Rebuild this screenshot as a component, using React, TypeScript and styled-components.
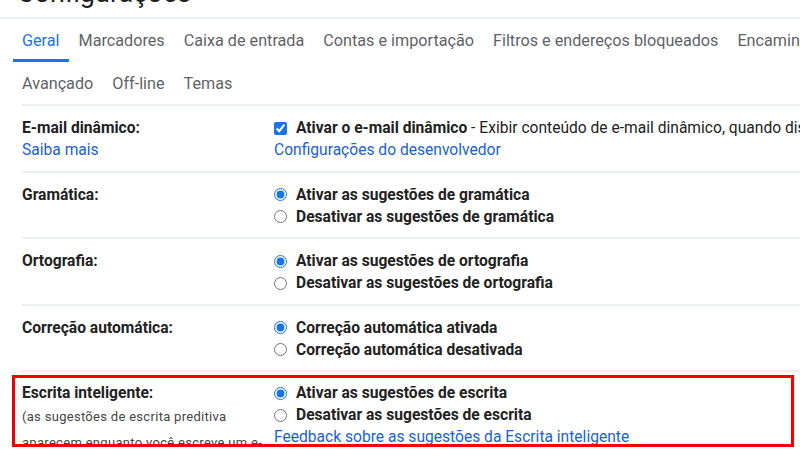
import React from "react";
import styled, { createGlobalStyle } from "styled-components";

const GlobalStyle = createGlobalStyle`
  html, body {
    margin: 0;
    padding: 0;
    background: #fff;
  }
  body {
    font-family: Roboto, "Liberation Sans", Arial, sans-serif;
    color: #222;
  }
`;

const Page = styled.div`
  width: 800px;
  height: 451px;
  overflow: hidden;
  background: #fff;
`;

const Header = styled.div`
  height: 17px;
  display: flex;
  align-items: flex-end;
  overflow: hidden;
  padding-left: 17px;
  border-bottom: 2px solid #eceff1;
`;

const Title = styled.h1`
  margin: 0 0 10px;
  font-size: 27px;
  line-height: 27px;
  font-weight: 400;
  color: #202124;
  white-space: nowrap;
`;

const TabRow = styled.div`
  display: flex;
  gap: 1px;
  padding-left: 13px;
  white-space: nowrap;
`;

const Tab = styled.div<{ $active?: boolean }>`
  height: 37px;
  padding: 3px 9px 0;
  line-height: 37px;
  font-size: 16.2px;
  color: ${(p) => (p.$active ? "#1a73e8" : "#5f6368")};
  border-bottom: 3px solid ${(p) => (p.$active ? "#1a73e8" : "transparent")};
  flex-shrink: 0;
`;

const Settings = styled.div`
  margin-left: 22px;
  margin-top: -1px;
  border-top: 2px solid #eceff1;
`;

const Row = styled.div<{ $last?: boolean }>`
  position: relative;
  display: grid;
  grid-template-columns: 252px 1fr;
  padding: ${(p) => (p.$last ? "10px 0 0" : "11px 0 9.5px")};
  border-bottom: ${(p) => (p.$last ? "none" : "2px solid #eceff1")};
  white-space: nowrap;
`;

const LabelCol = styled.div`
  display: flex;
  flex-direction: column;
`;

const Label = styled.div`
  font-size: 15.6px;
  font-weight: 700;
  line-height: 22px;
  color: #222;
`;

const Note = styled.div`
  font-size: 13px;
  line-height: 26px;
  letter-spacing: 0.3px;
  color: #444;
`;

const Options = styled.div`
  display: flex;
  flex-direction: column;
`;

const Option = styled.label`
  display: flex;
  align-items: center;
  gap: 9px;
  font-size: 15.6px;
  line-height: 22px;
  color: #222;

  input {
    margin: 0;
    width: 13px;
    height: 13px;
    accent-color: #1a73e8;
    flex-shrink: 0;
  }
`;

const Strong = styled.b`
  font-weight: 700;
`;

const Plain = styled.span`
  font-weight: 400;
`;

const Link = styled.a`
  font-size: 15.6px;
  line-height: 22px;
  color: #1a5fd6;
  text-decoration: none;
`;

const Highlight = styled.div`
  position: absolute;
  top: 3px;
  left: -10px;
  right: 6px;
  height: 66px;
  border: 3px solid #f50000;
  box-shadow: 0 4px 0 #fff;
  pointer-events: none;
`;

const tabsTop = ["Geral", "Marcadores", "Caixa de entrada", "Contas e importação", "Filtros e endereços bloqueados", "Encaminhamento e POP/IMAP"];
const tabsBottom = ["Avançado", "Off-line", "Temas"];

const radioRows = [
  { label: "Gramática:", name: "grammar", on: "Ativar as sugestões de gramática", off: "Desativar as sugestões de gramática" },
  { label: "Ortografia:", name: "spelling", on: "Ativar as sugestões de ortografia", off: "Desativar as sugestões de ortografia" },
  { label: "Correção automática:", name: "autocorrect", on: "Correção automática ativada", off: "Correção automática desativada" },
];

export default function App() {
  return (
    <Page>
      <GlobalStyle />
      <Header>
        <Title>Configurações</Title>
      </Header>

      <TabRow>
        {tabsTop.map((t, i) => (
          <Tab key={t} $active={i === 0}>
            {t}
          </Tab>
        ))}
      </TabRow>
      <TabRow>
        {tabsBottom.map((t) => (
          <Tab key={t}>{t}</Tab>
        ))}
      </TabRow>

      <Settings>
        <Row>
          <LabelCol>
            <Label>E-mail dinâmico:</Label>
            <Link href="#">Saiba mais</Link>
          </LabelCol>
          <Options>
            <Option>
              <input type="checkbox" defaultChecked />
              <span>
                <Strong>Ativar o e-mail dinâmico</Strong>
                <Plain> - Exibir conteúdo de e-mail dinâmico, quando disponível.</Plain>
              </span>
            </Option>
            <Link href="#">Configurações do desenvolvedor</Link>
          </Options>
        </Row>

        {radioRows.map((r) => (
          <Row key={r.name}>
            <LabelCol>
              <Label>{r.label}</Label>
            </LabelCol>
            <Options>
              <Option>
                <input type="radio" name={r.name} defaultChecked />
                <Strong>{r.on}</Strong>
              </Option>
              <Option>
                <input type="radio" name={r.name} />
                <Strong>{r.off}</Strong>
              </Option>
            </Options>
          </Row>
        ))}

        <Row $last>
          <LabelCol>
            <Label>Escrita inteligente:</Label>
            <Note>(as sugestões de escrita preditiva</Note>
            <Note>aparecem enquanto você escreve um e-</Note>
          </LabelCol>
          <Options>
            <Option>
              <input type="radio" name="smart" defaultChecked />
              <Strong>Ativar as sugestões de escrita</Strong>
            </Option>
            <Option>
              <input type="radio" name="smart" />
              <Strong>Desativar as sugestões de escrita</Strong>
            </Option>
            <Link href="#">Feedback sobre as sugestões da Escrita inteligente</Link>
          </Options>
          <Highlight />
        </Row>
      </Settings>
    </Page>
  );
}
